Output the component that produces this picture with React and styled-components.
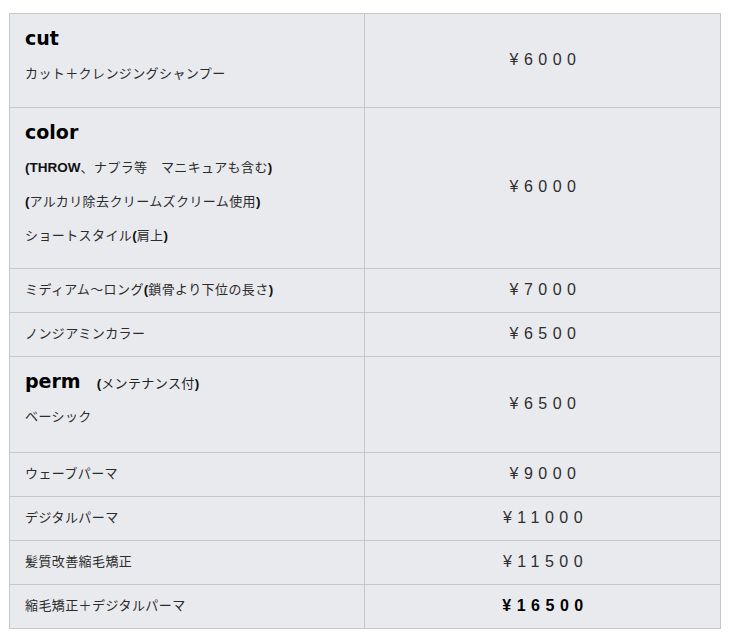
import React from 'react';
import styled, { createGlobalStyle } from 'styled-components';

const GlobalStyle = createGlobalStyle`
  body {
    margin: 0;
    background: #fff;
    font-family: "Liberation Sans", "Noto Sans CJK JP", sans-serif;
  }
`;

const Page = styled.div`
  padding: 13px 11px 10px 9px;
`;

const MenuTable = styled.table`
  width: 711px;
  border-collapse: collapse;
  table-layout: fixed;
  background-color: #e9eaee;
`;

const Col = styled.col`
  width: ${({ w }) => w}px;
`;

const Row = styled.tr`
  height: ${({ h }) => h || 44}px;
`;

const NameCell = styled.td`
  border: 1px solid #c6c7ca;
  vertical-align: top;
  padding: ${({ rich }) => (rich ? '6px 15px 0' : '3px 15px 0')};
`;

const PriceCell = styled.td`
  border: 1px solid #c6c7ca;
  text-align: center;
  vertical-align: middle;
  padding: 0 0 2px 6px;
  font-family: "Liberation Sans", "Noto Sans CJK JP", sans-serif;
  font-size: 16px;
  letter-spacing: 5.5px;
  color: ${({ strong }) => (strong ? '#000' : '#2e2e2e')};
  font-weight: ${({ strong }) => (strong ? 'bold' : 'normal')};
`;

const Heading = styled.div`
  height: 36px;
  line-height: 36px;
  font-family: "DejaVu Sans", sans-serif;
  font-size: 19px;
  font-weight: bold;
  color: #000;
`;

const Note = styled.span`
  font-size: 13px;
  font-weight: normal;
  margin-left: 16px;
  color: #222;
  font-family: "Noto Sans CJK JP", sans-serif;
  letter-spacing: 0.4px;
`;

const Line = styled.div`
  height: 34px;
  line-height: 34px;
  font-family: "Noto Sans CJK JP", sans-serif;
  font-size: 13px;
  letter-spacing: 0.4px;
  color: #2b2b2b;
  white-space: nowrap;
`;

const Latin = styled.b`
  font-family: "Liberation Sans", sans-serif;
  font-size: 13.5px;
  font-weight: bold;
  letter-spacing: 0;
  color: #111;
`;

const P = ({ children }) => <Latin>{children}</Latin>;

const App = () => (
  <Page>
    <GlobalStyle />
    <MenuTable>
      <colgroup>
        <Col w={355} />
        <Col w={356} />
      </colgroup>
      <tbody>
        <Row h={94}>
          <NameCell rich>
            <Heading>cut</Heading>
            <Line>カット＋クレンジングシャンプー</Line>
          </NameCell>
          <PriceCell>¥6000</PriceCell>
        </Row>
        <Row h={161}>
          <NameCell rich>
            <Heading>color</Heading>
            <Line>
              <P>(THROW</P>、ナプラ等　マニキュアも含む<P>)</P>
            </Line>
            <Line>
              <P>(</P>アルカリ除去クリームズクリーム使用<P>)</P>
            </Line>
            <Line>
              ショートスタイル<P>(</P>肩上<P>)</P>
            </Line>
          </NameCell>
          <PriceCell>¥6000</PriceCell>
        </Row>
        <Row>
          <NameCell>
            <Line>
              ミディアム〜ロング<P>(</P>鎖骨より下位の長さ<P>)</P>
            </Line>
          </NameCell>
          <PriceCell>¥7000</PriceCell>
        </Row>
        <Row>
          <NameCell>
            <Line>ノンジアミンカラー</Line>
          </NameCell>
          <PriceCell>¥6500</PriceCell>
        </Row>
        <Row h={96}>
          <NameCell rich>
            <Heading>
              perm
              <Note>
                <P>(</P>メンテナンス付<P>)</P>
              </Note>
            </Heading>
            <Line>ベーシック</Line>
          </NameCell>
          <PriceCell>¥6500</PriceCell>
        </Row>
        <Row>
          <NameCell>
            <Line>ウェーブパーマ</Line>
          </NameCell>
          <PriceCell>¥9000</PriceCell>
        </Row>
        <Row>
          <NameCell>
            <Line>デジタルパーマ</Line>
          </NameCell>
          <PriceCell>¥11000</PriceCell>
        </Row>
        <Row>
          <NameCell>
            <Line>髪質改善縮毛矯正</Line>
          </NameCell>
          <PriceCell>¥11500</PriceCell>
        </Row>
        <Row>
          <NameCell>
            <Line>縮毛矯正＋デジタルパーマ</Line>
          </NameCell>
          <PriceCell strong>¥16500</PriceCell>
        </Row>
      </tbody>
    </MenuTable>
  </Page>
);

export default App;
